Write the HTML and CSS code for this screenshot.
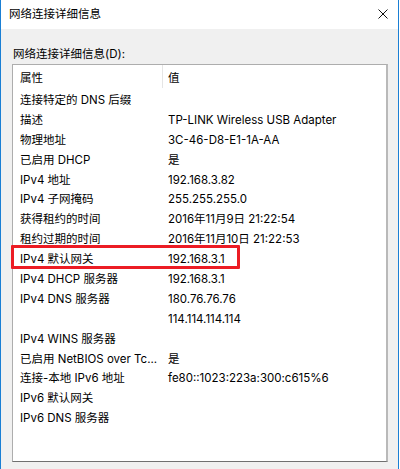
FILE: index.html
```html
<!DOCTYPE html>
<html lang="zh-CN">
<head>
<meta charset="utf-8">
<title>网络连接详细信息</title>
<link rel="stylesheet" href="styles.css">
</head>
<body>
<div class="window">
  <div class="titlebar">
    <span class="title">网络连接详细信息</span>
    <svg class="close" width="10" height="10" viewBox="0 0 10 10" aria-hidden="true">
      <path d="M0.5 0.5 L9.5 9.5 M9.5 0.5 L0.5 9.5" stroke="#111" stroke-width="1" fill="none"/>
    </svg>
  </div>
  <div class="client">
    <div class="label">网络连接详细信息(D):</div>
    <div class="listview">
      <div class="header">
        <div class="hcell">属性</div>
        <div class="hcell hcell-value">值</div>
      </div>
      <div class="rows">
        <div class="row"><div class="cell">连接特定的 DNS 后缀</div><div class="cell val"></div></div>
        <div class="row"><div class="cell">描述</div><div class="cell val">TP-LINK Wireless USB Adapter</div></div>
        <div class="row"><div class="cell">物理地址</div><div class="cell val">3C-46-D8-E1-1A-AA</div></div>
        <div class="row"><div class="cell">已启用 DHCP</div><div class="cell val">是</div></div>
        <div class="row"><div class="cell">IPv4 地址</div><div class="cell val">192.168.3.82</div></div>
        <div class="row"><div class="cell">IPv4 子网掩码</div><div class="cell val">255.255.255.0</div></div>
        <div class="row"><div class="cell">获得租约的时间</div><div class="cell val">2016年11月9日 21:22:54</div></div>
        <div class="row"><div class="cell">租约过期的时间</div><div class="cell val">2016年11月10日 21:22:53</div></div>
        <div class="row row-marked"><div class="cell">IPv4 默认网关</div><div class="cell val">192.168.3.1</div><span class="mark"></span></div>
        <div class="row"><div class="cell">IPv4 DHCP 服务器</div><div class="cell val">192.168.3.1</div></div>
        <div class="row"><div class="cell">IPv4 DNS 服务器</div><div class="cell val">180.76.76.76</div></div>
        <div class="row"><div class="cell"></div><div class="cell val">114.114.114.114</div></div>
        <div class="row"><div class="cell">IPv4 WINS 服务器</div><div class="cell val"></div></div>
        <div class="row"><div class="cell">已启用 NetBIOS over Tc...</div><div class="cell val">是</div></div>
        <div class="row"><div class="cell">连接-本地 IPv6 地址</div><div class="cell val">fe80::1023:223a:300:c615%6</div></div>
        <div class="row"><div class="cell">IPv6 默认网关</div><div class="cell val"></div></div>
        <div class="row"><div class="cell">IPv6 DNS 服务器</div><div class="cell val"></div></div>
      </div>
    </div>
  </div>
</div>
</body>
</html>
```
FILE: styles.css
```css
* {
  box-sizing: border-box;
}

html, body {
  margin: 0;
  padding: 0;
  background: #ffffff;
}

body {
  width: 400px;
  height: 469px;
  overflow: hidden;
  font-family: Inter, "Noto Sans CJK SC", sans-serif;
  font-size: 11.5px;
  color: #000;
}

.window {
  width: 399px;
  height: 469px;
  border-left: 1px solid #1a7fd4;
  border-right: 1px solid #1a7fd4;
  display: flex;
  flex-direction: column;
}

.titlebar {
  height: 29px;
  flex: none;
  background: #ffffff;
  display: flex;
  align-items: center;
  justify-content: space-between;
  padding: 0 9px 2px 8px;
}

.title {
  line-height: 16px;
}

.close {
  display: block;
  margin-right: 1px;
}

.client {
  flex: 1;
  background: #f0f0f0;
  padding: 17px 10px 7px 11px;
  display: flex;
  flex-direction: column;
}

.label {
  line-height: 16px;
  height: 16px;
  margin-bottom: 2px;
  padding-left: 1px;
}

.listview {
  flex: 1;
  background: #ffffff;
  border-top: 1px solid #adadad;
  border-left: 1px solid #adadad;
  border-right: 2px solid #b9b9b9;
  border-bottom: 1px solid #707070;
  display: flex;
  flex-direction: column;
}

.header {
  height: 23px;
  display: grid;
  grid-template-columns: 149px 1fr;
  flex: none;
}

.hcell {
  line-height: 16px;
  padding: 5px 0 0 7px;
}

.hcell-value {
  border-left: 1px solid #e5e5e5;
  padding-left: 5px;
}

.rows {
  display: flex;
  flex-direction: column;
}

.row {
  position: relative;
  display: grid;
  grid-template-columns: 149px 1fr;
  height: 19.9px;
}

.cell {
  line-height: 16px;
  padding: 4px 0 0 7px;
  white-space: nowrap;
  overflow: hidden;
}

.cell.val {
  padding-left: 6px;
}

.mark {
  position: absolute;
  left: -2px;
  top: -2px;
  width: 229px;
  height: 24px;
  border: 3px solid #ec1c24;
  border-radius: 1px;
  pointer-events: none;
}
```
